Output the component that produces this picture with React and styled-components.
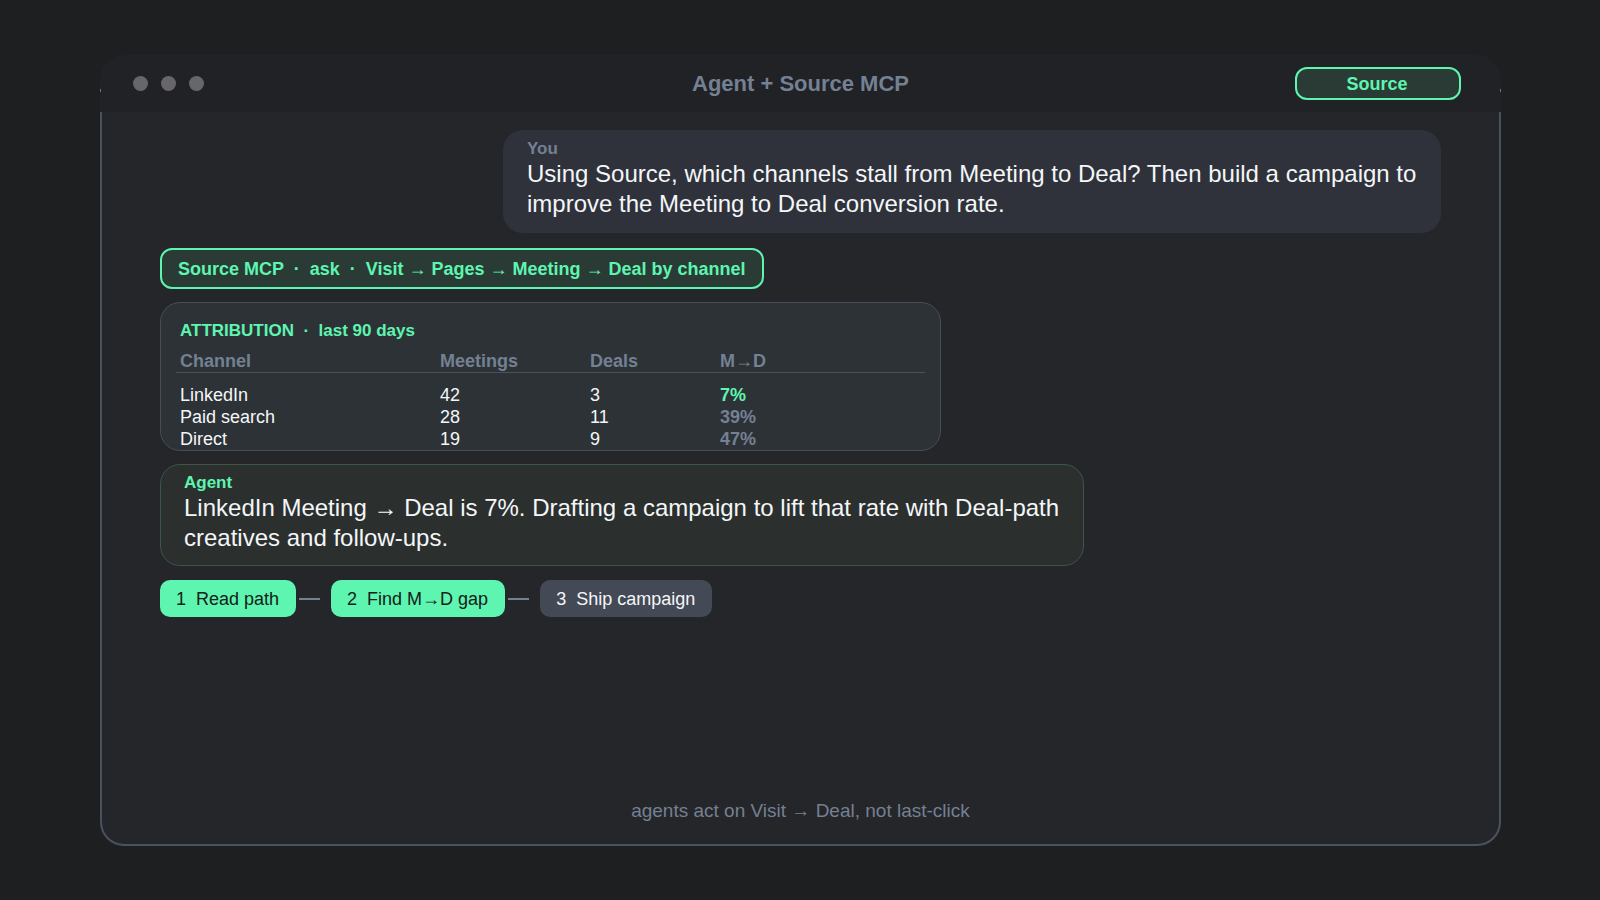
import React from 'react'
import styled, { createGlobalStyle } from 'styled-components'

const GREEN = '#5ef5b0'
const MUTED = '#748093'

const Global = createGlobalStyle`
  html, body {
    margin: 0;
    background: #1d1f21;
    font-family: "Liberation Sans", Arial, sans-serif;
  }
`

const Page = styled.div`
  width: 1600px;
  height: 900px;
  box-sizing: border-box;
  padding: 55px 99px 55px 100px;
  background: #1d1f21;
`

const Frame = styled.div`
  position: relative;
  height: 791px;
  display: flex;
  flex-direction: column;
`

const TitleBar = styled.div`
  height: 57px;
  flex: none;
  display: flex;
  align-items: center;
  justify-content: space-between;
  box-sizing: border-box;
  padding: 0 40px 0 33px;
  position: relative;
  background: #202225;
  border-radius: 24px 24px 0 0;
`

const Dots = styled.div`
  display: flex;
  gap: 13px;
`

const Dot = styled.span`
  width: 15px;
  height: 15px;
  border-radius: 50%;
  background: #66666b;
`

const Title = styled.div`
  position: absolute;
  left: 0;
  right: 0;
  top: 0;
  line-height: 57px;
  text-align: center;
  font-size: 22px;
  font-weight: 700;
  color: ${MUTED};
`

const Badge = styled.div`
  width: 166px;
  height: 33px;
  box-sizing: border-box;
  padding-right: 2px;
  border: 2px solid ${GREEN};
  border-radius: 12px;
  background: #2a3a34;
  color: ${GREEN};
  font-size: 18px;
  font-weight: 700;
  line-height: 30px;
  text-align: center;
`

const Tick = styled.span`
  position: absolute;
  top: 34px;
  ${p => (p.$right ? 'right: 0;' : 'left: 0;')}
  width: 1px;
  height: 3px;
  background: #6a7280;
`

const Body = styled.div`
  flex: 1;
  display: flex;
  flex-direction: column;
  align-items: flex-start;
  box-sizing: border-box;
  padding: 18px 58px 0 58px;
  background: #24262a;
  border: 2px solid #4a5260;
  border-top: none;
  border-radius: 0 0 24px 24px;
`

const Bubble = styled.div`
  box-sizing: border-box;
  border-radius: 20px;
  font-size: 24px;
  line-height: 30px;
  color: #f4f6f8;
`

const UserBubble = styled(Bubble)`
  align-self: flex-end;
  width: 938px;
  height: 103px;
  padding: 9px 24px;
  background: #2f323b;
`

const AgentBubble = styled(Bubble)`
  width: 924px;
  height: 102px;
  margin-top: 13px;
  padding: 8px 23px;
  background: #2b302e;
  border: 1px solid #3d5548;
`

const Speaker = styled.div`
  font-size: 17px;
  line-height: 20px;
  font-weight: 700;
  color: ${p => p.$color};
`

const ToolChip = styled.div`
  display: inline-block;
  box-sizing: border-box;
  height: 41px;
  margin-top: 15px;
  padding: 0 16px;
  border: 2px solid ${GREEN};
  border-radius: 12px;
  background: #2a3a34;
  color: ${GREEN};
  font-size: 18px;
  font-weight: 700;
  line-height: 39px;
  white-space: pre;
`

const TableCard = styled.div`
  width: 781px;
  height: 149px;
  box-sizing: border-box;
  margin-top: 13px;
  padding: 17px 15px 0 15px;
  background: #2d3236;
  border: 1px solid #474d58;
  border-radius: 20px;
`

const CardHead = styled.div`
  padding-left: 4px;
  color: ${GREEN};
  font-size: 17px;
  line-height: 22px;
  font-weight: 700;
  white-space: pre;
`

const Row = styled.div`
  display: grid;
  grid-template-columns: 260px 150px 130px 1fr;
  padding-left: 4px;
  font-size: 18px;
  line-height: 22px;
  color: #f4f6f8;
`

const HeadRow = styled(Row)`
  margin-top: 8px;
  margin-bottom: 11px;
  height: 22px;
  border-bottom: 1px solid #4a5260;
  color: ${MUTED};
  font-weight: 700;
`

const Rate = styled.span`
  font-weight: 700;
  color: ${p => (p.$hot ? GREEN : MUTED)};
`

const Steps = styled.div`
  display: flex;
  align-items: center;
  margin-top: 14px;
`

const Step = styled.div`
  height: 37px;
  box-sizing: border-box;
  padding: 0 17px 0 16px;
  border-radius: 10px;
  font-size: 18px;
  line-height: 39px;
  white-space: pre;
  background: ${p => (p.$done ? GREEN : '#444a55')};
  color: ${p => (p.$done ? '#14201b' : '#f4f6f8')};
`

const Link = styled.span`
  width: 21px;
  height: 2px;
  margin: 0 11px 0 3px;
  background: ${MUTED};
`

const Footer = styled.div`
  margin-top: auto;
  margin-bottom: 21px;
  align-self: center;
  font-size: 19px;
  line-height: 24px;
  color: ${MUTED};
`

const rows = [
  ['LinkedIn', '42', '3', '7%', true],
  ['Paid search', '28', '11', '39%'],
  ['Direct', '19', '9', '47%'],
]

export default function App() {
  return (
    <Page>
      <Global />
      <Frame>
        <TitleBar>
          <Dots>
            <Dot />
            <Dot />
            <Dot />
          </Dots>
          <Title>Agent + Source MCP</Title>
          <Badge>Source</Badge>
          <Tick />
          <Tick $right />
        </TitleBar>
        <Body>
          <UserBubble>
            <Speaker $color={MUTED}>You</Speaker>
            Using Source, which channels stall from Meeting to Deal? Then build a campaign to improve the Meeting to Deal conversion rate.
          </UserBubble>
          <ToolChip>{'Source MCP  ·  ask  ·  Visit → Pages → Meeting → Deal by channel'}</ToolChip>
          <TableCard>
            <CardHead>{'ATTRIBUTION  ·  last 90 days'}</CardHead>
            <HeadRow>
              <span>Channel</span>
              <span>Meetings</span>
              <span>Deals</span>
              <span>M→D</span>
            </HeadRow>
            {rows.map(([name, meetings, deals, rate, hot]) => (
              <Row key={name}>
                <span>{name}</span>
                <span>{meetings}</span>
                <span>{deals}</span>
                <Rate $hot={hot}>{rate}</Rate>
              </Row>
            ))}
          </TableCard>
          <AgentBubble>
            <Speaker $color={GREEN}>Agent</Speaker>
            LinkedIn Meeting → Deal is 7%. Drafting a campaign to lift that rate with Deal-path creatives and follow-ups.
          </AgentBubble>
          <Steps>
            <Step $done>{'1  Read path'}</Step>
            <Link />
            <Step $done>{'2  Find M→D gap'}</Step>
            <Link />
            <Step>{'3  Ship campaign'}</Step>
          </Steps>
          <Footer>agents act on Visit → Deal, not last-click</Footer>
        </Body>
      </Frame>
    </Page>
  )
}
